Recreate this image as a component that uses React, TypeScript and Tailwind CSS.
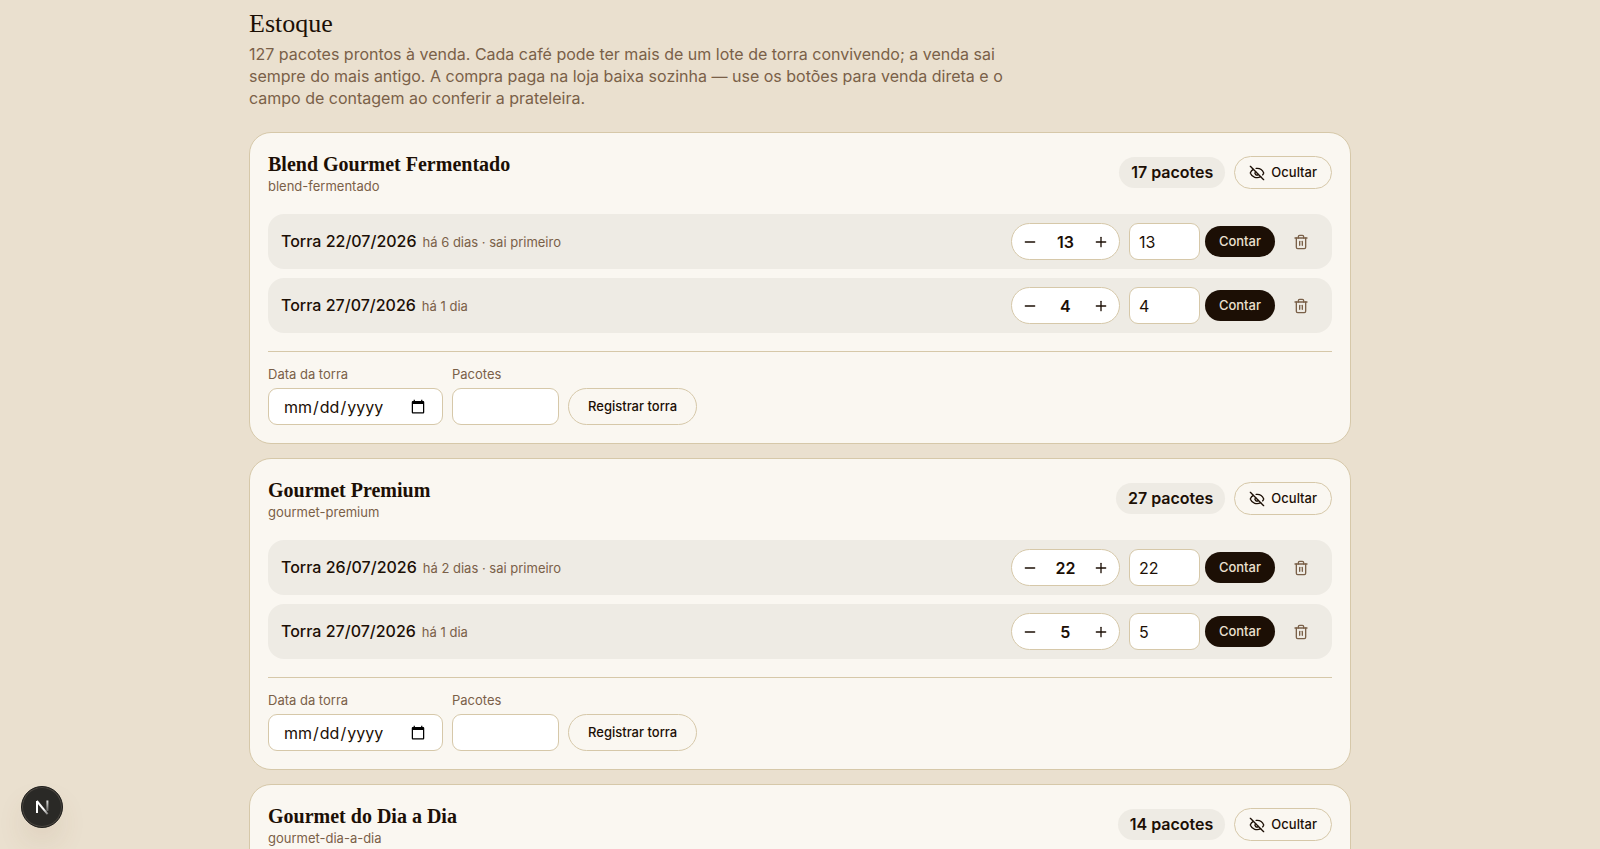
import { useState } from "react";
import { EyeOff, Minus, Plus, Trash2 } from "lucide-react";

type Lote = { data: string; idade: string; pacotes: number };
type Cafe = { nome: string; slug: string; lotes: Lote[] };

const cafes: Cafe[] = [
  {
    nome: "Blend Gourmet Fermentado",
    slug: "blend-fermentado",
    lotes: [
      { data: "22/07/2026", idade: "há 6 dias · sai primeiro", pacotes: 13 },
      { data: "27/07/2026", idade: "há 1 dia", pacotes: 4 },
    ],
  },
  {
    nome: "Gourmet Premium",
    slug: "gourmet-premium",
    lotes: [
      { data: "26/07/2026", idade: "há 2 dias · sai primeiro", pacotes: 22 },
      { data: "27/07/2026", idade: "há 1 dia", pacotes: 5 },
    ],
  },
  {
    nome: "Gourmet do Dia a Dia",
    slug: "gourmet-dia-a-dia",
    lotes: [{ data: "27/07/2026", idade: "há 1 dia · sai primeiro", pacotes: 14 }],
  },
];

function LinhaLote({ lote }: { lote: Lote }) {
  const [qtd, setQtd] = useState(lote.pacotes);
  const [contagem, setContagem] = useState(String(lote.pacotes));
  return (
    <li className="flex items-center justify-between rounded-2xl bg-[#eeebe4] py-[9px] pr-3.5 pl-[13px]">
      <p className="text-base leading-5 font-medium">
        Torra {lote.data}
        <span className="ml-1.5 text-[13px] font-normal text-[#7a6048]">{lote.idade}</span>
      </p>
      <div className="flex items-center gap-[9px]">
        <div className="flex h-[37px] items-center rounded-full border border-[#d6c8a9] bg-white">
          <button type="button" aria-label="Remover um pacote" className="flex h-full w-9 items-center justify-center" onClick={() => setQtd(Math.max(0, qtd - 1))}>
            <Minus size={16} />
          </button>
          <span className="w-[35px] text-center text-base font-semibold">{qtd}</span>
          <button type="button" aria-label="Adicionar um pacote" className="flex h-full w-9 items-center justify-center" onClick={() => setQtd(qtd + 1)}>
            <Plus size={16} />
          </button>
        </div>
        <form className="flex items-center gap-[5px]" onSubmit={(e) => e.preventDefault()}>
          <input
            aria-label="Contagem"
            inputMode="numeric"
            className="h-[37px] w-[71px] rounded-[9px] border border-[#d6c8a9] bg-white px-[9px] text-base"
            value={contagem}
            onChange={(e) => setContagem(e.target.value)}
          />
          <button type="submit" className="h-[31px] rounded-full bg-[#1c0f05] px-3.5 text-[13px] font-medium text-[#ebe0cf]">
            Contar
          </button>
        </form>
        <button type="button" aria-label="Excluir lote" className="flex size-[34px] items-center justify-center rounded-full text-[#7a6048]">
          <Trash2 size={16} />
        </button>
      </div>
    </li>
  );
}

function CartaoCafe({ cafe }: { cafe: Cafe }) {
  const total = cafe.lotes.reduce((soma, l) => soma + l.pacotes, 0);
  return (
    <article className="rounded-[22px] border border-[#d6c8a9] bg-[#faf7f1] p-[18px]">
      <header className="flex items-center justify-between">
        <div>
          <h2 className="font-['Liberation_Serif',serif] text-[20px] leading-[27px] font-bold">{cafe.nome}</h2>
          <p className="text-[13px] leading-4 text-[#7a6048]">{cafe.slug}</p>
        </div>
        <div className="flex items-center gap-[9px]">
          <span className="rounded-full bg-[#eeebe4] px-3 py-1 text-base leading-[23px] font-semibold">{total} pacotes</span>
          <button type="button" className="flex h-[33px] items-center gap-1.5 rounded-full border border-[#d6c8a9] px-3.5 text-[13px] font-medium">
            <EyeOff size={16} />
            Ocultar
          </button>
        </div>
      </header>
      <ul className="mt-5 flex flex-col gap-[9px]">
        {cafe.lotes.map((l) => (
          <LinhaLote key={l.data} lote={l} />
        ))}
      </ul>
      <form className="mt-[18px] flex items-end gap-[9px] border-t border-[#d6c8a9] pt-[13px]" onSubmit={(e) => e.preventDefault()}>
        <label className="flex flex-col gap-[5px] text-[13px] leading-[18px] text-[#7a6048]">
          Data da torra
          <input type="date" className="h-[37px] w-[175px] rounded-[9px] border border-[#d6c8a9] bg-white px-3.5 text-base text-[#1c0f05]" />
        </label>
        <label className="flex flex-col gap-[5px] text-[13px] leading-[18px] text-[#7a6048]">
          Pacotes
          <input inputMode="numeric" className="h-[37px] w-[107px] rounded-[9px] border border-[#d6c8a9] bg-white px-3.5 text-base text-[#1c0f05]" />
        </label>
        <button type="submit" className="h-[37px] rounded-full border border-[#d6c8a9] px-[19px] text-[13px] font-medium">
          Registrar torra
        </button>
      </form>
    </article>
  );
}

export default function App() {
  return (
    <div className="min-h-screen bg-[#eae0cf] font-[Inter,sans-serif] text-[#1c0f05]">
      <main className="mx-auto max-w-[1102px] pt-2 pb-8">
        <h1 className="font-['Liberation_Serif',serif] text-[26px] leading-8">Estoque</h1>
        <p className="mt-[3px] max-w-[756px] text-base leading-[22px] text-[#7a6048]">
          127 pacotes prontos à venda. Cada café pode ter mais de um lote de torra convivendo; a venda sai sempre do mais antigo. A compra paga na loja baixa sozinha — use os botões para venda direta e o campo de contagem ao conferir a prateleira.
        </p>
        <div className="mt-[23px] flex flex-col gap-3.5">
          {cafes.map((c) => (
            <CartaoCafe key={c.slug} cafe={c} />
          ))}
        </div>
      </main>
      <button type="button" aria-label="Ferramentas de desenvolvimento" className="fixed bottom-[21px] left-[21px] flex size-[42px] items-center justify-center rounded-full border border-[#1e1d1b] bg-[#2a2926] shadow-[inset_0_0_0_1px_#4a4640,0_16px_32px_-8px_rgba(120,80,40,0.24)]">
        <svg width="18" height="18" viewBox="0 0 18 18" fill="none" strokeWidth="2">
          <defs>
            <linearGradient id="perna" x1="0" y1="2" x2="0" y2="14" gradientUnits="userSpaceOnUse">
              <stop stopColor="#fff" stopOpacity="0.9" />
              <stop offset="1" stopColor="#fff" stopOpacity="0.2" />
            </linearGradient>
            <linearGradient id="diagonal" x1="3" y1="3" x2="15" y2="17" gradientUnits="userSpaceOnUse">
              <stop offset="0.6" stopColor="#fff" />
              <stop offset="1" stopColor="#fff" stopOpacity="0.3" />
            </linearGradient>
          </defs>
          <path d="M4 15V3" stroke="#fff" />
          <path d="M3.8 3 14.6 16.2" stroke="url(#diagonal)" />
          <path d="M14.4 2.5V13" stroke="url(#perna)" />
        </svg>
      </button>
    </div>
  );
}
